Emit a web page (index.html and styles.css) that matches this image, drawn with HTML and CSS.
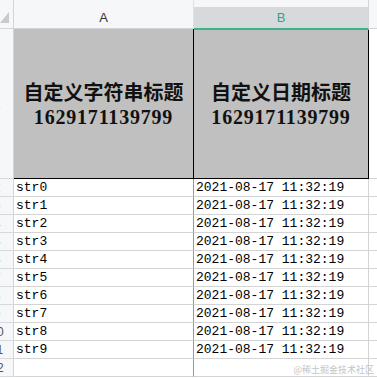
FILE: index.html
```html
<!DOCTYPE html>
<html>
<head>
<meta charset="utf-8">
<link rel="stylesheet" href="styles.css">
</head>
<body>
<div class="sheet">
  <div class="corner"><svg class="tri" width="10" height="12" viewBox="0 0 10 12"><polygon points="0,11 9,0 9,11" fill="#c9cacc"/></svg></div>
  <div class="colhead">A</div>
  <div class="colhead sel">B</div>
  <div class="colhead rest"></div>

  <div class="rowhead"><span>1</span></div>
  <div class="title title-a"><div>自定义字符串标题</div><div class="num">1629171139799</div></div>
  <div class="title title-b"><div>自定义日期标题</div><div class="num">1629171139799</div></div>
  <div class="cell rest"></div>

  <div class="rowhead"><span>2</span></div><div class="cell a">str0</div><div class="cell b">2021-08-17 11:32:19</div><div class="cell rest"></div>
  <div class="rowhead"><span>3</span></div><div class="cell a">str1</div><div class="cell b">2021-08-17 11:32:19</div><div class="cell rest"></div>
  <div class="rowhead"><span>4</span></div><div class="cell a">str2</div><div class="cell b">2021-08-17 11:32:19</div><div class="cell rest"></div>
  <div class="rowhead"><span>5</span></div><div class="cell a">str3</div><div class="cell b">2021-08-17 11:32:19</div><div class="cell rest"></div>
  <div class="rowhead"><span>6</span></div><div class="cell a">str4</div><div class="cell b">2021-08-17 11:32:19</div><div class="cell rest"></div>
  <div class="rowhead"><span>7</span></div><div class="cell a">str5</div><div class="cell b">2021-08-17 11:32:19</div><div class="cell rest"></div>
  <div class="rowhead"><span>8</span></div><div class="cell a">str6</div><div class="cell b">2021-08-17 11:32:19</div><div class="cell rest"></div>
  <div class="rowhead"><span>9</span></div><div class="cell a">str7</div><div class="cell b">2021-08-17 11:32:19</div><div class="cell rest"></div>
  <div class="rowhead"><span>10</span></div><div class="cell a">str8</div><div class="cell b">2021-08-17 11:32:19</div><div class="cell rest"></div>
  <div class="rowhead"><span>11</span></div><div class="cell a">str9</div><div class="cell b">2021-08-17 11:32:19</div><div class="cell rest"></div>
  <div class="rowhead"><span>12</span></div><div class="cell a"></div><div class="cell b"></div><div class="cell rest"></div>
</div>
<div class="watermark">@稀土掘金技术社区</div>
</body>
</html>
```
FILE: styles.css
```css
* { box-sizing: border-box; }
html, body { margin: 0; padding: 0; background: #ffffff; }
body { width: 377px; height: 378px; overflow: hidden; position: relative; }

.sheet {
  display: grid;
  grid-template-columns: 14px 180px 175px 1fr;
  grid-template-rows: 29px 150px repeat(11, 18px);
  font-family: "Liberation Sans", Arial, sans-serif;
}

.corner {
  background: #f6f7f9;
  border-right: 1px solid #d3d5d8;
  border-bottom: 1px solid #d3d5d8;
  position: relative;
}
.tri { position: absolute; left: 0; top: 12px; }

.colhead {
  background: #f6f7f9;
  border-right: 1px solid #dfe1e4;
  border-bottom: 1px solid #d3d5d8;
  display: flex;
  align-items: center;
  justify-content: center;
  padding-top: 7px;
  font-size: 13px;
  color: #333;
}
.colhead.sel {
  background: linear-gradient(#f6f7f9 0 7px, #d7dadd 7px);
  border-bottom: 2px solid #3bb38a;
  border-right: 1px solid #d3d5d8;
  color: #2fa77d;
  margin-bottom: -1px;
  position: relative;
}
.colhead.rest { border-right: none; }

.rowhead {
  background: #f6f7f9;
  border-right: 1px solid #d3d5d8;
  border-bottom: 1px solid #d7d9dc;
  overflow: hidden;
  display: flex;
  align-items: center;
  font-size: 12px;
  color: #555;
}
.rowhead span {
  flex: none;
  width: 30px;
  margin-left: -18px;
  text-align: center;
}

.title {
  background: #c0c0c0;
  border-right: 1px solid #000;
  border-bottom: 1px solid #000;
  display: flex;
  flex-direction: column;
  align-items: center;
  justify-content: center;
  font-family: "Liberation Serif", "Noto Sans CJK SC", serif;
  font-weight: bold;
  font-size: 20px;
  line-height: 24px;
  color: #111;
  padding-top: 3px;
}
.title .num { letter-spacing: 0.8px; }

.cell {
  border-right: 1px solid #d4d4d4;
  border-bottom: 1px solid #d4d4d4;
  font-family: "Liberation Mono", monospace;
  font-size: 13px;
  color: #000;
  display: flex;
  align-items: center;
  white-space: nowrap;
  overflow: hidden;
}
.cell.a { padding-left: 2px; border-right-color: #9a9a9a; }
.cell.b { padding-left: 2px; }
.cell.rest { border-right: none; }

.watermark {
  position: absolute;
  right: 3px;
  bottom: 2px;
  font-family: "Noto Sans CJK SC", sans-serif;
  font-size: 9px;
  color: #c4c4c4;
}
```
